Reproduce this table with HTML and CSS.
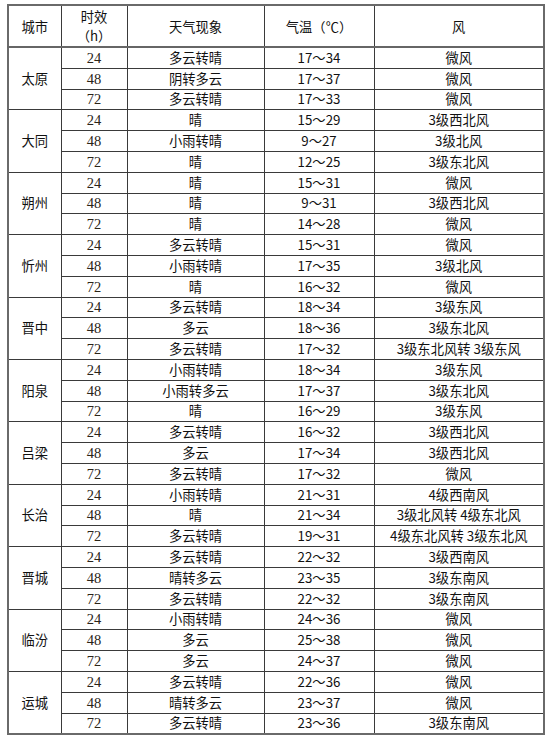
FILE: index.html
```html
<!DOCTYPE html>
<html lang="zh-CN">
<head>
<meta charset="utf-8">
<link rel="stylesheet" href="styles.css">
</head>
<body>
<table class="wx">
<colgroup>
<col class="c-city"><col class="c-hour"><col class="c-sky"><col class="c-temp"><col class="c-wind">
</colgroup>
<tr class="head"><td>城市</td><td>时效<br>（h）</td><td>天气现象</td><td>气温（℃）</td><td>风</td></tr>
<tr><td rowspan="3" class="city">太原</td><td class="h">24</td><td>多云转晴</td><td>17～34</td><td>微风</td></tr>
<tr><td class="h">48</td><td>阴转多云</td><td>17～37</td><td>微风</td></tr>
<tr><td class="h">72</td><td>多云转晴</td><td>17～33</td><td>微风</td></tr>
<tr><td rowspan="3" class="city">大同</td><td class="h">24</td><td>晴</td><td>15～29</td><td>3级西北风</td></tr>
<tr><td class="h">48</td><td>小雨转晴</td><td>9～27</td><td>3级北风</td></tr>
<tr><td class="h">72</td><td>晴</td><td>12～25</td><td>3级东北风</td></tr>
<tr><td rowspan="3" class="city">朔州</td><td class="h">24</td><td>晴</td><td>15～31</td><td>微风</td></tr>
<tr><td class="h">48</td><td>晴</td><td>9～31</td><td>3级西北风</td></tr>
<tr><td class="h">72</td><td>晴</td><td>14～28</td><td>微风</td></tr>
<tr><td rowspan="3" class="city">忻州</td><td class="h">24</td><td>多云转晴</td><td>15～31</td><td>微风</td></tr>
<tr><td class="h">48</td><td>小雨转晴</td><td>17～35</td><td>3级北风</td></tr>
<tr><td class="h">72</td><td>晴</td><td>16～32</td><td>微风</td></tr>
<tr><td rowspan="3" class="city">晋中</td><td class="h">24</td><td>多云转晴</td><td>18～34</td><td>3级东风</td></tr>
<tr><td class="h">48</td><td>多云</td><td>18～36</td><td>3级东北风</td></tr>
<tr><td class="h">72</td><td>多云转晴</td><td>17～32</td><td>3级东北风转 3级东风</td></tr>
<tr><td rowspan="3" class="city">阳泉</td><td class="h">24</td><td>小雨转晴</td><td>18～34</td><td>3级东风</td></tr>
<tr><td class="h">48</td><td>小雨转多云</td><td>17～37</td><td>3级东北风</td></tr>
<tr><td class="h">72</td><td>晴</td><td>16～29</td><td>3级东风</td></tr>
<tr><td rowspan="3" class="city">吕梁</td><td class="h">24</td><td>多云转晴</td><td>16～32</td><td>3级西北风</td></tr>
<tr><td class="h">48</td><td>多云</td><td>17～34</td><td>3级西北风</td></tr>
<tr><td class="h">72</td><td>多云转晴</td><td>17～32</td><td>微风</td></tr>
<tr><td rowspan="3" class="city">长治</td><td class="h">24</td><td>小雨转晴</td><td>21～31</td><td>4级西南风</td></tr>
<tr><td class="h">48</td><td>晴</td><td>21～34</td><td>3级北风转 4级东北风</td></tr>
<tr><td class="h">72</td><td>多云转晴</td><td>19～31</td><td>4级东北风转 3级东北风</td></tr>
<tr><td rowspan="3" class="city">晋城</td><td class="h">24</td><td>多云转晴</td><td>22～32</td><td>3级西南风</td></tr>
<tr><td class="h">48</td><td>晴转多云</td><td>23～35</td><td>3级东南风</td></tr>
<tr><td class="h">72</td><td>多云转晴</td><td>22～32</td><td>3级东南风</td></tr>
<tr><td rowspan="3" class="city">临汾</td><td class="h">24</td><td>小雨转晴</td><td>24～36</td><td>微风</td></tr>
<tr><td class="h">48</td><td>多云</td><td>25～38</td><td>微风</td></tr>
<tr><td class="h">72</td><td>多云</td><td>24～37</td><td>微风</td></tr>
<tr><td rowspan="3" class="city">运城</td><td class="h">24</td><td>多云转晴</td><td>22～36</td><td>微风</td></tr>
<tr><td class="h">48</td><td>晴转多云</td><td>23～37</td><td>微风</td></tr>
<tr><td class="h">72</td><td>多云转晴</td><td>23～36</td><td>3级东南风</td></tr>
</table>
</body>
</html>
```

FILE: styles.css
```css
html, body {
  margin: 0;
  padding: 0;
  background: #fff;
}
body {
  padding: 4px 0 0 7px;
  font-family: "Noto Sans CJK SC", "Noto Sans", sans-serif;
  font-size: 13.3px;
  color: #111;
}
.wx {
  border-collapse: collapse;
  table-layout: fixed;
  width: 536px;
  border: 2px solid #6a6a6a;
}
.c-city { width: 53px; }
.c-hour { width: 66px; }
.c-sky { width: 137px; }
.c-temp { width: 110px; }
.c-wind { width: 170px; }
.wx td {
  border: 1px solid #3a3a3a;
  padding: 0;
  text-align: center;
  vertical-align: middle;
  height: 19.8px;
  line-height: 16px;
  white-space: nowrap;
}
.wx tr.head td {
  height: 40px;
  line-height: 19px;
  border-bottom-width: 2px;
  border-bottom-color: #666;
}
.wx td.h {
  font-family: "Liberation Serif", "Times New Roman", serif;
  font-size: 14.5px;
  color: #2a2418;
}
```
